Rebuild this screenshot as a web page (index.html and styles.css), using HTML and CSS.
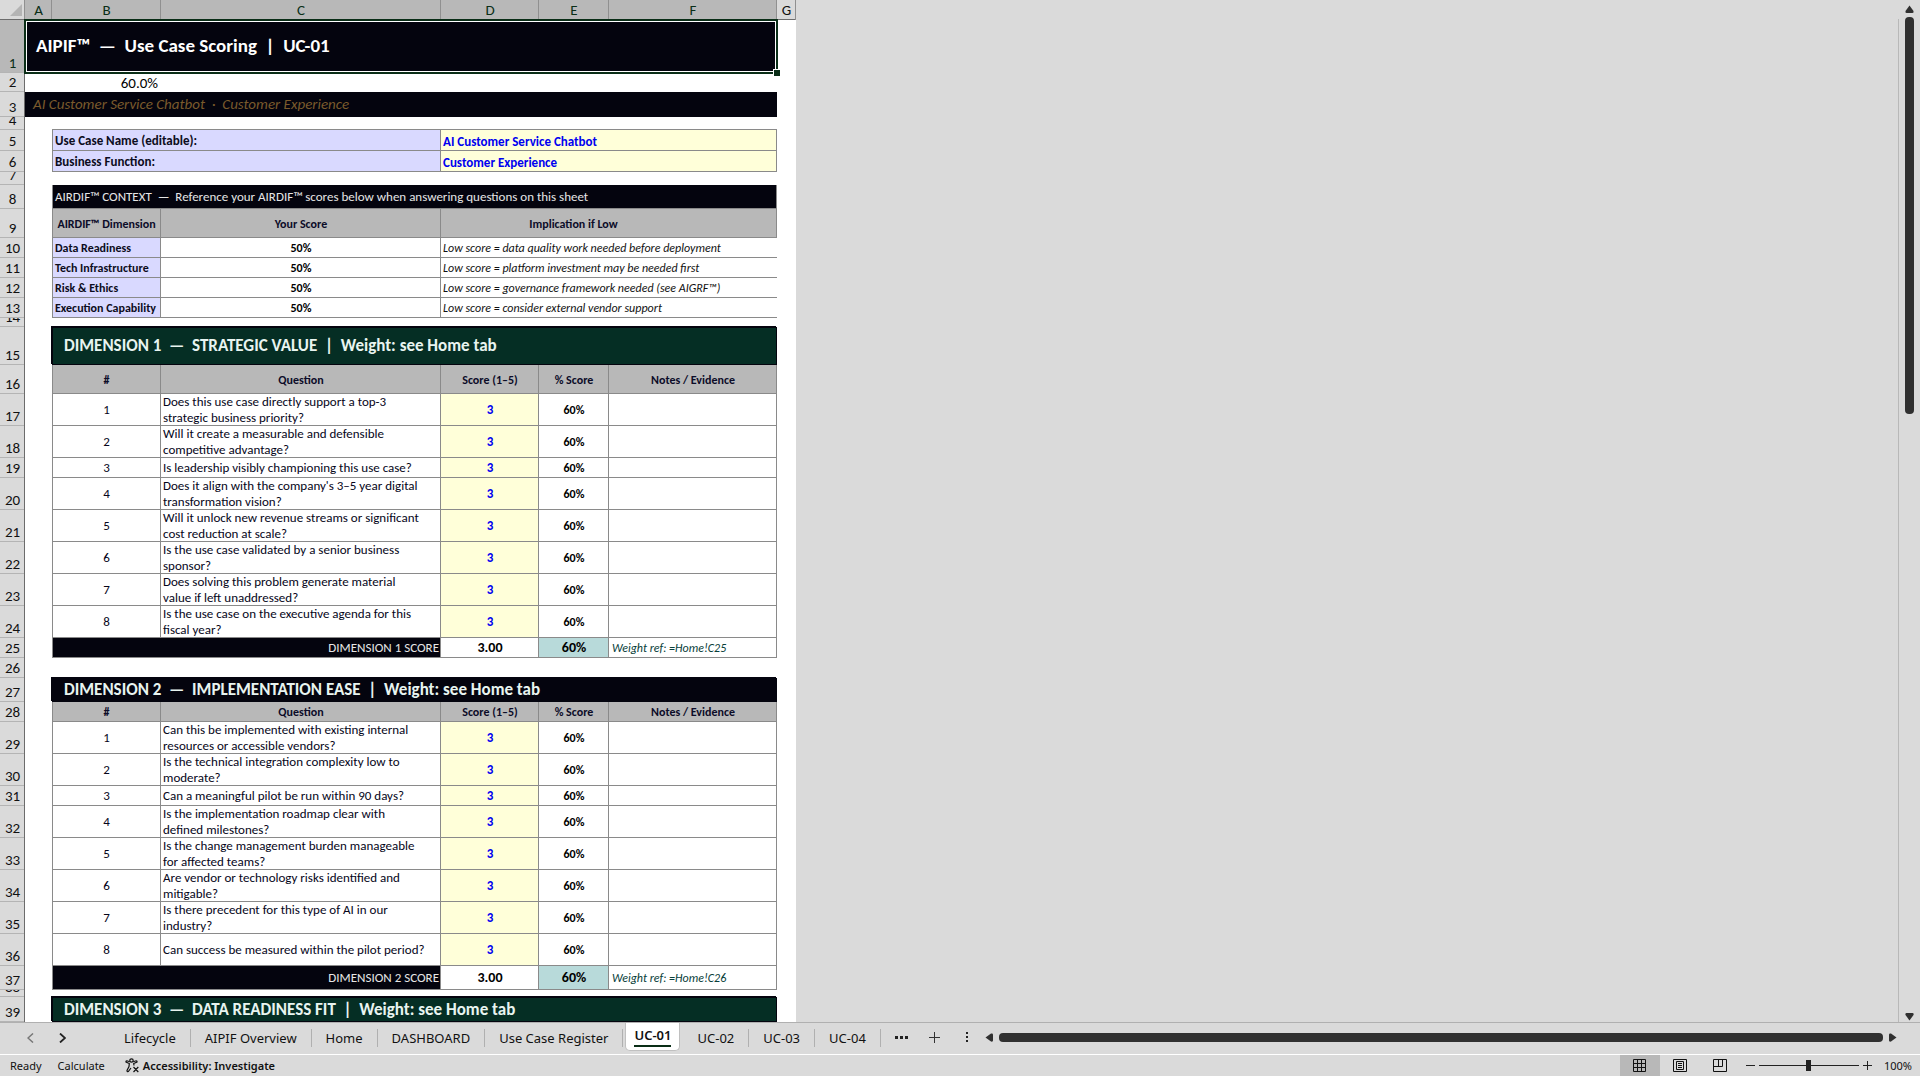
FILE: index.html
```
<!DOCTYPE html>
<html lang="en">
<head>
<meta charset="utf-8">
<title>AIPIF Use Case Scoring</title>
<link rel="stylesheet" href="styles.css">
</head>
<body>
<div class="app">
  <main class="workspace">
    <div class="pane">
      <table class="sheet">
        <colgroup><col class="c-num"><col class="c-a"><col class="c-b"><col class="c-c"><col class="c-d"><col class="c-e"><col class="c-f"><col class="c-g"></colgroup>
        <thead>
          <tr class="h20"><th class="corner"><svg width="12" height="12" viewBox="0 0 12 12"><path d="M12 0V12H0Z" fill="#b4b4b4"/></svg></th><th>A</th><th>B</th><th>C</th><th>D</th><th>E</th><th>F</th><th class="plain">G</th></tr>
        </thead>
        <tbody>
          <tr class="h53"><th class="on"><div class="num">1</div></th><td colspan="6" class="title">AIPIF™  —  Use Case Scoring  |  UC-01<span class="handle"></span></td><td></td></tr>
          <tr class="h19"><th><div class="num">2</div></th><td></td><td class="plain-num">60.0%</td><td colspan="5"></td></tr>
          <tr class="h25"><th><div class="num">3</div></th><td colspan="6" class="subtitle">AI Customer Service Chatbot  ·  Customer Experience</td><td></td></tr>
          <tr class="h13"><th><div class="num">4</div></th><td colspan="7"></td></tr>
          <tr class="h21"><th><div class="num">5</div></th><td></td><td colspan="2" class="box edge first label">Use Case Name (editable):</td><td colspan="3" class="box first input left">AI Customer Service Chatbot</td><td></td></tr>
          <tr class="h21"><th><div class="num">6</div></th><td></td><td colspan="2" class="box edge label">Business Function:</td><td colspan="3" class="box input left">Customer Experience</td><td></td></tr>
          <tr class="h13"><th><div class="num">7</div></th><td colspan="7"></td></tr>
          <tr class="h24"><th><div class="num">8</div></th><td></td><td colspan="5" class="box edge dark">AIRDIF™ CONTEXT  —  Reference your AIRDIF™ scores below when answering questions on this sheet</td><td></td></tr>
          <tr class="h29"><th><div class="num">9</div></th><td></td><td class="box edge head">AIRDIF™ Dimension</td><td class="box head">Your Score</td><td colspan="3" class="box head implication">Implication if Low</td><td></td></tr>
          <tr class="h20"><th><div class="num">10</div></th><td></td><td class="box edge dim">Data Readiness</td><td class="box score">50%</td><td colspan="3" class="under note">Low score = data quality work needed before deployment</td><td></td></tr>
          <tr class="h20"><th><div class="num">11</div></th><td></td><td class="box edge dim">Tech Infrastructure</td><td class="box score">50%</td><td colspan="3" class="under note">Low score = platform investment may be needed first</td><td></td></tr>
          <tr class="h20"><th><div class="num">12</div></th><td></td><td class="box edge dim">Risk &amp; Ethics</td><td class="box score">50%</td><td colspan="3" class="under note">Low score = governance framework needed (see AIGRF™)</td><td></td></tr>
          <tr class="h20"><th><div class="num">13</div></th><td></td><td class="box edge dim">Execution Capability</td><td class="box score">50%</td><td colspan="3" class="under note">Low score = consider external vendor support</td><td></td></tr>
          <tr class="h9"><th><div class="num">14</div></th><td colspan="7"></td></tr>

          <tr class="h38"><th><div class="num">15</div></th><td></td><td colspan="5" class="banner green">DIMENSION 1  —  STRATEGIC VALUE  |  Weight: see Home tab</td><td></td></tr>
          <tr class="h29"><th><div class="num">16</div></th><td></td><td class="box edge head">#</td><td class="box head">Question</td><td class="box head">Score (1–5)</td><td class="box head">% Score</td><td class="box head">Notes / Evidence</td><td></td></tr>
          <tr class="h32"><th><div class="num">17</div></th><td></td><td class="box edge idx">1</td><td class="box question">Does this use case directly support a top-3<br>strategic business priority?</td><td class="box input">3</td><td class="box score">60%</td><td class="box"></td><td></td></tr>
          <tr class="h32"><th><div class="num">18</div></th><td></td><td class="box edge idx">2</td><td class="box question">Will it create a measurable and defensible<br>competitive advantage?</td><td class="box input">3</td><td class="box score">60%</td><td class="box"></td><td></td></tr>
          <tr class="h20"><th><div class="num">19</div></th><td></td><td class="box edge idx">3</td><td class="box question">Is leadership visibly championing this use case?</td><td class="box input">3</td><td class="box score">60%</td><td class="box"></td><td></td></tr>
          <tr class="h32"><th><div class="num">20</div></th><td></td><td class="box edge idx">4</td><td class="box question">Does it align with the company's 3–5 year digital<br>transformation vision?</td><td class="box input">3</td><td class="box score">60%</td><td class="box"></td><td></td></tr>
          <tr class="h32"><th><div class="num">21</div></th><td></td><td class="box edge idx">5</td><td class="box question">Will it unlock new revenue streams or significant<br>cost reduction at scale?</td><td class="box input">3</td><td class="box score">60%</td><td class="box"></td><td></td></tr>
          <tr class="h32"><th><div class="num">22</div></th><td></td><td class="box edge idx">6</td><td class="box question">Is the use case validated by a senior business<br>sponsor?</td><td class="box input">3</td><td class="box score">60%</td><td class="box"></td><td></td></tr>
          <tr class="h32"><th><div class="num">23</div></th><td></td><td class="box edge idx">7</td><td class="box question">Does solving this problem generate material<br>value if left unaddressed?</td><td class="box input">3</td><td class="box score">60%</td><td class="box"></td><td></td></tr>
          <tr class="h32"><th><div class="num">24</div></th><td></td><td class="box edge idx">8</td><td class="box question">Is the use case on the executive agenda for this<br>fiscal year?</td><td class="box input">3</td><td class="box score">60%</td><td class="box"></td><td></td></tr>
          <tr class="h20"><th><div class="num">25</div></th><td></td><td colspan="2" class="box edge dark total">DIMENSION 1 SCORE</td><td class="box sum">3.00</td><td class="box sum teal">60%</td><td class="box note ref">Weight ref: =Home!C25</td><td></td></tr>
          <tr class="h20"><th><div class="num">26</div></th><td colspan="7"></td></tr>

          <tr class="h24"><th><div class="num">27</div></th><td></td><td colspan="5" class="banner navy">DIMENSION 2  —  IMPLEMENTATION EASE  |  Weight: see Home tab</td><td></td></tr>
          <tr class="h20"><th><div class="num">28</div></th><td></td><td class="box edge head">#</td><td class="box head">Question</td><td class="box head">Score (1–5)</td><td class="box head">% Score</td><td class="box head">Notes / Evidence</td><td></td></tr>
          <tr class="h32"><th><div class="num">29</div></th><td></td><td class="box edge idx">1</td><td class="box question">Can this be implemented with existing internal<br>resources or accessible vendors?</td><td class="box input">3</td><td class="box score">60%</td><td class="box"></td><td></td></tr>
          <tr class="h32"><th><div class="num">30</div></th><td></td><td class="box edge idx">2</td><td class="box question">Is the technical integration complexity low to<br>moderate?</td><td class="box input">3</td><td class="box score">60%</td><td class="box"></td><td></td></tr>
          <tr class="h20"><th><div class="num">31</div></th><td></td><td class="box edge idx">3</td><td class="box question">Can a meaningful pilot be run within 90 days?</td><td class="box input">3</td><td class="box score">60%</td><td class="box"></td><td></td></tr>
          <tr class="h32"><th><div class="num">32</div></th><td></td><td class="box edge idx">4</td><td class="box question">Is the implementation roadmap clear with<br>defined milestones?</td><td class="box input">3</td><td class="box score">60%</td><td class="box"></td><td></td></tr>
          <tr class="h32"><th><div class="num">33</div></th><td></td><td class="box edge idx">5</td><td class="box question">Is the change management burden manageable<br>for affected teams?</td><td class="box input">3</td><td class="box score">60%</td><td class="box"></td><td></td></tr>
          <tr class="h32"><th><div class="num">34</div></th><td></td><td class="box edge idx">6</td><td class="box question">Are vendor or technology risks identified and<br>mitigable?</td><td class="box input">3</td><td class="box score">60%</td><td class="box"></td><td></td></tr>
          <tr class="h32"><th><div class="num">35</div></th><td></td><td class="box edge idx">7</td><td class="box question">Is there precedent for this type of AI in our<br>industry?</td><td class="box input">3</td><td class="box score">60%</td><td class="box"></td><td></td></tr>
          <tr class="h32"><th><div class="num">36</div></th><td></td><td class="box edge idx">8</td><td class="box question">Can success be measured within the pilot period?</td><td class="box input">3</td><td class="box score">60%</td><td class="box"></td><td></td></tr>
          <tr class="h24"><th><div class="num">37</div></th><td></td><td colspan="2" class="box edge dark total">DIMENSION 2 SCORE</td><td class="box sum">3.00</td><td class="box sum teal">60%</td><td class="box note ref">Weight ref: =Home!C26</td><td></td></tr>
          <tr class="h7"><th><div class="num">38</div></th><td colspan="7"></td></tr>
          <tr class="h25"><th><div class="num">39</div></th><td></td><td colspan="5" class="banner green">DIMENSION 3  —  DATA READINESS FIT  |  Weight: see Home tab</td><td></td></tr>
        </tbody>
      </table>
      <div class="empty"></div>
    </div>
    <div class="vscroll">
      <svg width="9" height="8" viewBox="0 0 9 8"><path d="M4.5 0.500 8.500 6Q9 8 7.500 8H1.500Q0 8 .5 6Z" fill="#303030"/></svg>
      <div class="vtrack"><div class="vthumb"></div></div>
      <svg width="9" height="8" viewBox="0 0 9 8"><path d="M4.5 7.500 8.500 2Q9 0 7.500 0H1.500Q0 0 .5 2Z" fill="#303030"/></svg>
    </div>
  </main>

  <nav class="tabbar">
    <div class="arrows">
      <button class="icon" aria-label="Previous sheets"><svg width="7" height="10" viewBox="0 0 7 10"><path d="M6 .5 1 5l5 4.500" fill="none" stroke="#777" stroke-width="1.500"/></svg></button>
      <button class="icon" aria-label="Next sheets"><svg width="7" height="10" viewBox="0 0 7 10"><path d="M1 .5 6 5 1 9.500" fill="none" stroke="#222" stroke-width="1.800"/></svg></button>
    </div>
    <button class="tab">Lifecycle</button>
    <button class="tab">AIPIF Overview</button>
    <button class="tab">Home</button>
    <button class="tab">DASHBOARD</button>
    <button class="tab">Use Case Register</button>
    <button class="tab active"><span>UC-01</span></button>
    <button class="tab">UC-02</button>
    <button class="tab">UC-03</button>
    <button class="tab">UC-04</button>
    <div class="extras">
      <button class="icon" aria-label="More sheets"><svg width="13" height="3" viewBox="0 0 13 3"><path d="M0 0h3v3H0zM5 0h3v3H5zM10 0h3v3h-3z" fill="#222"/></svg></button>
      <button class="icon" aria-label="New sheet"><svg width="13" height="13" viewBox="0 0 13 13"><path d="M6.500 1v11M1 6.500h11" stroke="#333" stroke-width="1"/></svg></button>
      <button class="icon" aria-label="Resize"><svg width="3" height="11" viewBox="0 0 3 11"><path d="M0 0h2v2H0zM0 4h2v2H0zM0 8h2v2H0z" fill="#222"/></svg></button>
    </div>
    <div class="hscroll">
      <svg width="8" height="9" viewBox="0 0 8 9"><path d="M.5 4.500 6 .5Q8 0 8 1.500v6Q8 9 6 8.500Z" fill="#303030"/></svg>
      <div class="hthumb"></div>
      <svg width="8" height="9" viewBox="0 0 8 9"><path d="M7.500 4.500 2 .5Q0 0 0 1.500v6Q0 9 2 8.500Z" fill="#303030"/></svg>
    </div>
  </nav>

  <footer class="status">
    <span>Ready</span>
    <span>Calculate</span>
    <button class="access"><svg width="15" height="15" viewBox="0 0 15 15" fill="none" stroke="#111" stroke-width="1.200"><circle cx="6.500" cy="2.500" r="1.700"/><path d="M4.800 3.800 1.800 2.800Q.8 2.800 1 4l3.300 1.500L4 8.500 2 12.500q0 1.500 1.300 1L6 10M8.200 3.800l3-1q1 0 .8 1.200L8.700 5.500 9 7.500M8.500 9l4.800 5M13.300 9l-4.800 5"/></svg>Accessibility: Investigate</button>
    <div class="views">
      <button class="view current" aria-label="Normal"><svg width="14" height="13" viewBox="0 0 14 13"><path d="M.5.5h12v12H.5zM.5 4.500h12M.5 8.500h12M4.500.5v12M8.500.5v12" fill="none" stroke="#111"/></svg></button>
      <button class="view" aria-label="Page layout"><svg width="14" height="13" viewBox="0 0 14 13"><path d="M.5.5h13v12H.5zM3.500 2.500h7v8h-7zM5 4.500h4M5 6.500h4M5 8.500h4" fill="none" stroke="#111"/></svg></button>
      <button class="view" aria-label="Page break preview"><svg width="14" height="13" viewBox="0 0 14 13"><path d="M.5.5h13v12H.5zM.5 7.500h9M5.500.5v7M9.500.5v7" fill="none" stroke="#111"/></svg></button>
    </div>
    <div class="zoom">
      <button class="icon" aria-label="Zoom out"><svg width="9" height="9" viewBox="0 0 9 9"><path d="M0 4.500h9" stroke="#222"/></svg></button>
      <input type="range" min="0" max="200" value="100" aria-label="Zoom">
      <button class="icon" aria-label="Zoom in"><svg width="9" height="9" viewBox="0 0 9 9"><path d="M0 4.500h9M4.500 0v9" stroke="#222"/></svg></button>
      <span>100%</span>
    </div>
  </footer>
</div>
</body>
</html>
```
FILE: styles.css
```
:root {
  --chrome: #dadada;
  --line: #8a8a8a;
  --navy: #04040e;
  --head: #b8b8b8;
  --cell-font: Carlito, Calibri, Lato, sans-serif;
  --ui-font: "Noto Sans", "Open Sans", sans-serif;
}

* { box-sizing: border-box; }

body {
  margin: 0;
  background: var(--chrome);
  font-family: var(--ui-font);
  color: #111;
}

button {
  border: 0;
  padding: 0;
  background: none;
  font: inherit;
  color: inherit;
}

svg { display: block; }

.app {
  display: flex;
  flex-direction: column;
  height: 100vh;
}

.workspace {
  display: flex;
  flex: 1;
  min-height: 0;
}

.pane {
  display: flex;
  align-items: flex-start;
  flex: 1;
  min-width: 0;
  overflow: hidden;
}

.empty {
  flex: 1;
  align-self: stretch;
  margin-top: 19px;
  border-right: 1px solid #b8b8b8;
}

/* Worksheet */
.sheet {
  flex: none;
  width: 796px;
  table-layout: fixed;
  border-spacing: 0;
  background: #fff;
  font-family: var(--cell-font);
  font-size: 13px;
  line-height: 16px;
  color: #000;
}

.c-num { width: 25px; }
.c-a { width: 27px; }
.c-b { width: 109px; }
.c-c { width: 280px; }
.c-d { width: 98px; }
.c-e { width: 70px; }
.c-f { width: 168px; }
.c-g { width: 19px; }

.h7 { --h: 7px; }
.h9 { --h: 9px; }
.h13 { --h: 13px; }
.h19 { --h: 19px; }
.h20 { --h: 20px; }
.h21 { --h: 21px; }
.h24 { --h: 24px; }
.h25 { --h: 25px; }
.h29 { --h: 29px; }
.h32 { --h: 32px; }
.h38 { --h: 38px; }
.h53 { --h: 53px; }

.sheet tr { height: var(--h); }

.sheet td, .sheet th {
  padding: 0;
  white-space: pre;
}

.sheet th { font-weight: 400; font-size: 15px; color: #111; }

.sheet thead th {
  background: var(--head);
  color: #0a2e17;
  line-height: 19px;
  box-shadow: inset -1px 0 0 #909090, inset 0 -1px 0 #6c6c6c;
}

.sheet thead .corner, .sheet thead .plain { background: var(--chrome); color: #111; }
.sheet .corner svg { margin: 4px 0 4px 10px; }

.sheet tbody th {
  background: var(--chrome);
  box-shadow: inset -1px 0 0 #6c6c6c, inset 0 -1px 0 #b4b4b4;
}

.sheet tbody th.on { background: var(--head); color: #0a2e17; }

.num {
  display: flex;
  align-items: flex-end;
  justify-content: center;
  height: var(--h);
  padding-bottom: 1px;
  overflow: hidden;
  line-height: 17px;
}

.sheet .title {
  position: relative;
  padding: 0 11px 2px;
  background: var(--navy);
  color: #fff;
  font-size: 19px;
  font-weight: 700;
  outline: 2px solid #0a2e17;
  outline-offset: -1px;
  box-shadow: inset 0 0 0 2px #fff;
}

.handle {
  position: absolute;
  right: -3px;
  bottom: -3px;
  width: 6px;
  height: 6px;
  background: #0a2e17;
  box-shadow: 0 0 0 1px #fff;
  z-index: 1;
}

.sheet .plain-num {
  padding-right: 3px;
  text-align: right;
  font-size: 15px;
}

.sheet .subtitle {
  padding: 0 8px 2px;
  background: var(--navy);
  color: #7a5a2c;
  font-size: 15px;
  font-style: italic;
}

.sheet .box { box-shadow: inset -1px -1px 0 var(--line); padding: 0 2px; }
.sheet .edge { box-shadow: inset -1px -1px 0 var(--line), inset 1px 0 0 var(--line); }
.sheet .first { box-shadow: inset -1px -1px 0 var(--line), 0 -1px 0 var(--line); }
.sheet .edge.first { box-shadow: inset -1px -1px 0 var(--line), inset 1px 0 0 var(--line), 0 -1px 0 var(--line); }
.sheet .under { box-shadow: inset 0 -1px 0 var(--line); padding: 0 2px; }

.sheet .label, .sheet .dim { background: #d9d9ff; font-weight: 700; color: #0c0c20; }
.sheet .label, .sheet .dim, .sheet .dark { padding-left: 3px; }
.sheet .dim, .sheet .head, .sheet .score { font-size: 12px; font-weight: 700; }

.sheet .head { background: var(--head); color: #0c0c28; text-align: center; }
.sheet .implication { padding-right: 73px; }

.sheet .dark { background: var(--navy); color: #e6e6e6; }
.sheet .total { text-align: right; }

.sheet .input {
  background: #ffffd9;
  color: #0000f0;
  font-weight: 700;
  text-align: center;
}
.sheet .input.left { text-align: left; padding-top: 3px; }

.sheet .score, .sheet .idx, .sheet .sum { text-align: center; }
.sheet .idx, .sheet .question { color: #06061a; }
.sheet .note { font-size: 12px; font-style: italic; color: #111; }
.sheet .sum { font-size: 14px; font-weight: 700; }
.sheet .teal { background: #b8dada; }
.sheet .ref { padding-left: 3px; color: #08403a; }

.sheet .banner {
  padding: 0 12px;
  color: #e8f4f0;
  font-size: 17px;
  font-weight: 700;
}
.sheet .green { background: #052e24; box-shadow: inset 0 0 0 1px var(--navy), -1px -1px 0 var(--navy); }
.sheet .navy { background: var(--navy); box-shadow: -1px -1px 0 var(--navy); }

/* Scroll bars */
.vscroll {
  display: flex;
  flex-direction: column;
  align-items: center;
  gap: 4px;
  flex: none;
  width: 21px;
  padding: 5px 0 1px;
}
.vtrack { flex: 1; }
.vthumb { width: 9px; height: 40%; border-radius: 4px; background: #303030; }

/* Sheet tabs */
.tabbar {
  display: flex;
  flex: none;
  align-items: center;
  height: 32px;
  padding-bottom: 2px;
  border-top: 1px solid #b0b0b0;
  font-size: 13px;
}

.icon { display: flex; align-items: center; justify-content: center; }

.arrows {
  display: flex;
  gap: 25px;
  width: 110px;
  padding-left: 27px;
}

.tab {
  height: 18px;
  padding: 0 14px;
  border-right: 1px solid #b0b0b0;
  line-height: 18px;
}

.tab.active {
  align-self: flex-start;
  height: 28px;
  margin: 0 3px 0 2px;
  padding: 0 8px;
  border: 1px solid #c0c0c0;
  border-top: 0;
  border-radius: 0 0 5px 5px;
  background: #fff;
  font-weight: 600;
}

.active span {
  display: block;
  margin-top: -2px;
  border-bottom: 2px solid #0a2e17;
  line-height: 20px;
}

.extras {
  display: flex;
  align-items: center;
  gap: 20px;
  width: 104px;
  padding-left: 14px;
}

.extras .icon:last-child { margin-left: 5px; }

.hscroll {
  display: flex;
  align-items: center;
  flex: 1;
  gap: 6px;
  padding-right: 23px;
}
.hthumb { flex: 1; height: 9px; border-radius: 4px; background: #303030; }

/* Status bar */
.status {
  display: flex;
  flex: none;
  align-items: center;
  gap: 16px;
  height: 22px;
  padding: 0 8px 0 10px;
  border-top: 1px solid #fff;
  font-size: 11px;
}

.access {
  display: flex;
  align-items: center;
  gap: 3px;
  margin-left: 4px;
  font-weight: 600;
}

.views { display: flex; align-self: stretch; margin-left: auto; }
.view {
  display: flex;
  align-items: center;
  justify-content: center;
  width: 40px;
}
.view.current { background: #b8b8b8; }

.zoom { display: flex; align-items: center; gap: 4px; margin-left: -10px; }
.zoom span { margin-left: 8px; }

.zoom input {
  width: 100px;
  height: 12px;
  margin: 0;
  appearance: none;
  background: linear-gradient(#222, #222) center / 100% 1px no-repeat;
}
.zoom input::-webkit-slider-thumb {
  appearance: none;
  width: 5px;
  height: 11px;
  background: #222;
}
```
